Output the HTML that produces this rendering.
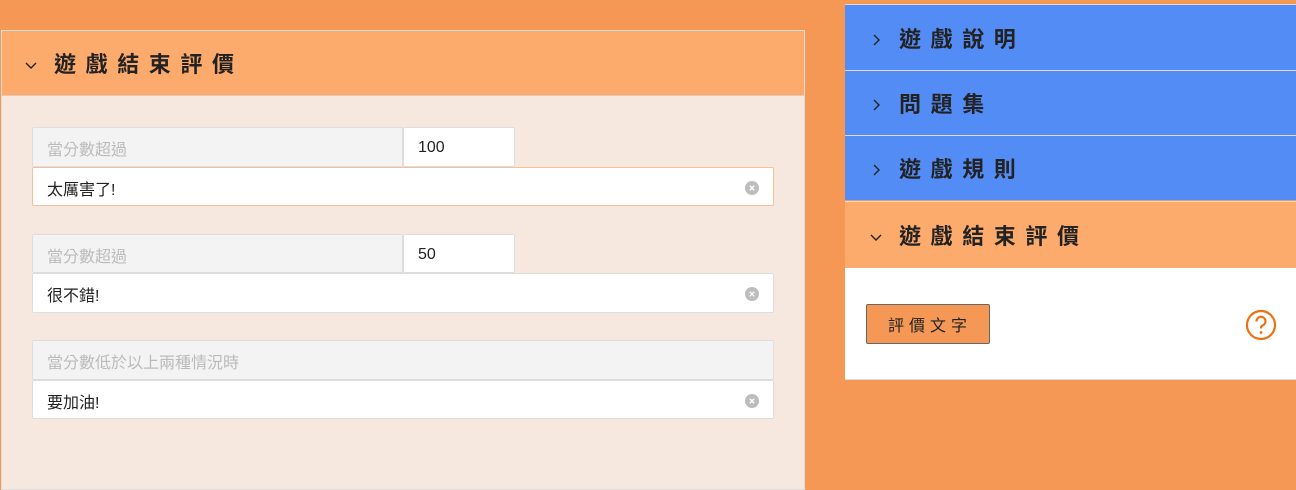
<!DOCTYPE html>
<html><head><meta charset="utf-8"><style>
*{box-sizing:border-box;margin:0;padding:0}
body{width:1296px;height:478px;background:#f59855;position:relative;overflow:hidden;font-family:"Liberation Sans","Noto Sans CJK TC",sans-serif}
.abs{position:absolute}
.lp{left:1px;top:30px;width:804px;height:460px;background:#f6e8df;border:1px solid #ddd}
.lh{left:1px;top:30px;width:804px;height:66px;background:#fdaa6d;border:1px solid #ddd;border-bottom:1px solid #e0c9b8}
.ht{font-size:22px;font-weight:bold;letter-spacing:9.6px;color:#222;line-height:1;padding-top:3px}
.lbl{background:#f3f3f3;border:1px solid #ddd;border-radius:2px;color:#bbb;font-size:16px;padding-left:14px;display:flex;align-items:center;padding-top:2px}
.inp{background:#fff;border:1px solid #ddd;border-radius:2px;color:#222;font-size:16px;padding-left:14px;display:flex;align-items:center;padding-top:2px}
.x{position:absolute;right:14px;top:50%;margin-top:-6px;width:14px;height:14px}
.rh{left:845px;width:451px;height:65px;border-top:1px solid #ddd;display:flex;align-items:center;padding-left:24px}
.chev{width:30px;height:16px;display:flex;align-items:center;padding-top:3px}
</style></head><body>
<div class="abs lp"></div>
<div class="abs lh" style="display:flex;align-items:center;padding-left:22px"><span class="chev"><svg width="14" height="14" viewBox="0 0 14 14"><path d="M2 5 L7 10 L12 5" fill="none" stroke="#222" stroke-width="1.4"/></svg></span><span class="ht">遊戲結束評價</span></div>

<div class="abs lbl" style="left:32px;top:127px;width:371px;height:40px">當分數超過</div>
<div class="abs inp" style="left:403px;top:127px;width:112px;height:40px">100</div>
<div class="abs inp" style="left:32px;top:167px;width:742px;height:39px;border-color:#f4c19b">太厲害了!<svg class="x" viewBox="0 0 14 14"><circle cx="7" cy="7" r="7" fill="#bdbdbd"/><path d="M4.8 4.8 L9.2 9.2 M9.2 4.8 L4.8 9.2" stroke="#fff" stroke-width="1.4"/></svg></div>

<div class="abs lbl" style="left:32px;top:234px;width:371px;height:39px">當分數超過</div>
<div class="abs inp" style="left:403px;top:234px;width:112px;height:39px">50</div>
<div class="abs inp" style="left:32px;top:273px;width:742px;height:40px">很不錯!<svg class="x" viewBox="0 0 14 14"><circle cx="7" cy="7" r="7" fill="#bdbdbd"/><path d="M4.8 4.8 L9.2 9.2 M9.2 4.8 L4.8 9.2" stroke="#fff" stroke-width="1.4"/></svg></div>

<div class="abs lbl" style="left:32px;top:340px;width:742px;height:40px">當分數低於以上兩種情況時</div>
<div class="abs inp" style="left:32px;top:380px;width:742px;height:39px">要加油!<svg class="x" viewBox="0 0 14 14"><circle cx="7" cy="7" r="7" fill="#bdbdbd"/><path d="M4.8 4.8 L9.2 9.2 M9.2 4.8 L4.8 9.2" stroke="#fff" stroke-width="1.4"/></svg></div>

<div class="abs rh" style="top:4px;height:67px;background:#548cf6"><span class="chev"><svg width="14" height="14" viewBox="0 0 14 14"><path d="M5 2 L10 7 L5 12" fill="none" stroke="#222" stroke-width="1.4"/></svg></span><span class="ht">遊戲說明</span></div>
<div class="abs rh" style="top:70px;background:#548cf6"><span class="chev"><svg width="14" height="14" viewBox="0 0 14 14"><path d="M5 2 L10 7 L5 12" fill="none" stroke="#222" stroke-width="1.4"/></svg></span><span class="ht">問題集</span></div>
<div class="abs rh" style="top:135px;background:#548cf6"><span class="chev"><svg width="14" height="14" viewBox="0 0 14 14"><path d="M5 2 L10 7 L5 12" fill="none" stroke="#222" stroke-width="1.4"/></svg></span><span class="ht">遊戲規則</span></div>
<div class="abs rh" style="top:201px;height:67px;background:#fdaa6d"><span class="chev"><svg width="14" height="14" viewBox="0 0 14 14"><path d="M2 5 L7 10 L12 5" fill="none" stroke="#222" stroke-width="1.4"/></svg></span><span class="ht">遊戲結束評價</span></div>
<div class="abs" style="left:845px;top:268px;width:451px;height:112px;background:#fff;border-bottom:1px solid #ddd"></div>
<div class="abs" style="left:866px;top:304px;width:124px;height:40px;background:#f59855;border:1px solid #666;border-radius:2px;font-size:16px;letter-spacing:5px;display:flex;align-items:center;justify-content:center;color:#222;padding-left:4px">評價文字</div>
<svg class="abs" style="left:1245px;top:309px" width="32" height="32" viewBox="0 0 32 32"><circle cx="16" cy="16" r="14" fill="#fff" stroke="#f07010" stroke-width="2.2"/><path d="M11.5 12.5 A4.5 4.5 0 1 1 17.5 16.5 Q16 17.3 16 19.5" fill="none" stroke="#f07010" stroke-width="2.2"/><circle cx="16" cy="23.5" r="1.4" fill="#f07010"/></svg>
</body></html>
